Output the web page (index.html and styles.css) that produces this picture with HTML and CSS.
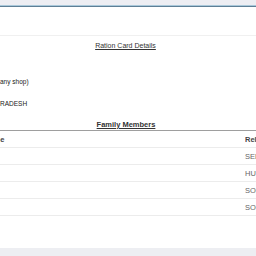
FILE: index.html
```html
<!DOCTYPE html>
<html lang="en">
<head>
    <meta charset="UTF-8">
    <meta name="viewport" content="width=device-width, initial-scale=1.0">
    <title>Ration Card Details</title>
    <link rel="stylesheet" href="styles.css">
</head>
<body>
    <div class="topbar"></div>
    <main class="page">
        <div class="top-space"></div>

        <h3 class="card-title">Ration Card Details</h3>

        <div class="details">
            <p class="detail shop">any shop)</p>
            <p class="detail state">RADESH</p>
        </div>

        <h4 class="members-title">Family Members</h4>

        <table class="members">
            <thead>
                <tr>
                    <th class="col-name"><span class="cut">Name</span></th>
                    <th class="col-rel">Relation</th>
                </tr>
            </thead>
            <tbody>
                <tr><td></td><td>SELF</td></tr>
                <tr><td></td><td>HUSBAND</td></tr>
                <tr><td></td><td>SON</td></tr>
                <tr><td></td><td>SON</td></tr>
            </tbody>
        </table>
    </main>
    <footer class="bottombar"></footer>
</body>
</html>
```

FILE: styles.css
```css
html, body {
    margin: 0;
    width: 256px;
    height: 256px;
    overflow: hidden;
}

body {
    font-family: "Liberation Sans", Arial, sans-serif;
    color: #333;
    background: #fff;
    display: flex;
    flex-direction: column;
}

.topbar {
    height: 5px;
    background-color: #edeef3;
    border-bottom: 1px solid #a9c8da;
    box-shadow: 0 1px 0 #5e7f96;
    margin-bottom: 1px;
}

.page {
    flex-grow: 1;
    overflow: hidden;
}

.top-space {
    height: 28px;
    border-bottom: 1px solid #f0f0f0;
}

.card-title {
    margin: 6px 0 0;
    padding-right: 5px;
    font-size: 7px;
    font-weight: normal;
    line-height: 8px;
    text-align: center;
    text-decoration: underline;
    color: #333;
}

.details {
    margin-top: 28px;
}

.detail {
    margin: 0;
    font-size: 6.5px;
    line-height: 8px;
    color: #222;
}

.state {
    margin-top: 14px;
}

.members-title {
    margin: 12px 0 0;
    padding-right: 4px;
    font-size: 7.5px;
    line-height: 9px;
    font-weight: bold;
    text-align: center;
    text-decoration: underline;
    color: #333;
}

.members {
    width: 320px;
    table-layout: fixed;
    border-collapse: collapse;
    font-size: 7.5px;
    margin-top: 1px;
}

.members thead tr {
    border-top: 1px solid #9e9e9e;
}

.members tr {
    border-bottom: 1px solid #ececec;
}

.members th, .members td {
    padding: 0;
    height: 16px;
    text-align: left;
    vertical-align: middle;
    white-space: nowrap;
    overflow: hidden;
}

.members th {
    font-weight: bold;
    color: #444;
}

.members td {
    color: #666;
}

.col-name {
    width: 245px;
}

.cut {
    display: inline-block;
    margin-left: -16px;
}

.bottombar {
    height: 8px;
    background-color: #edeef2;
}
```
